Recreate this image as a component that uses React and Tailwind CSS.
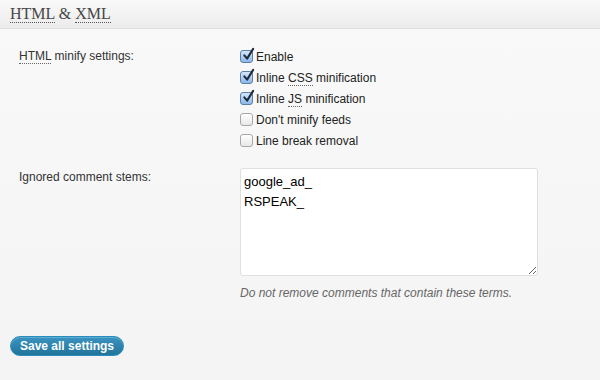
import React from 'react';

const font = { fontFamily: '"Liberation Sans", Arial, sans-serif' };

const Check = ({ checked }) => (
  <span
    className={
      'relative inline-block w-[13px] h-[13px] rounded-[3px] border shrink-0 ' +
      (checked
        ? 'border-[#5a7fa8] bg-gradient-to-b from-[#d4e6fb] to-[#8db7ea]'
        : 'border-[#a8a8a8] bg-gradient-to-b from-white to-[#e8e8e8]')
    }
  >
    {checked && (
      <svg viewBox="0 0 14 14" className="absolute left-[1px] top-[-4px] w-[13px] h-[14px]">
        <path d="M2.5 8.5 L5.5 12 L12 1.5" fill="none" stroke="#1d2a3a" strokeWidth="2.2" strokeLinecap="round" strokeLinejoin="round" />
      </svg>
    )}
  </span>
);

const Abbr = ({ children }) => (
  <span className="border-b border-dotted border-[#666]">{children}</span>
);

const options = [
  { label: 'Enable', checked: true },
  { label: <>Inline <Abbr>CSS</Abbr> minification</>, checked: true },
  { label: <>Inline <Abbr>JS</Abbr> minification</>, checked: true },
  { label: "Don't minify feeds", checked: false },
  { label: 'Line break removal', checked: false },
];

export default function App() {
  return (
    <div className="w-[600px] h-[380px] bg-gradient-to-b from-[#f9f9f9] to-[#f4f4f4] text-[#333] overflow-hidden" style={font}>
      {/* Kutu başlığı */}
      <div className="h-[29px] bg-gradient-to-b from-[#f9f9f9] to-[#ececec] border-b border-[#dfdfdf] pl-[10px] pt-[4px]">
        <h3 className="text-[16px] leading-[19px] text-[#464646]" style={{ fontFamily: '"Liberation Serif", Georgia, serif' }}>
          <span className="border-b border-dotted border-[#555]">HTML</span> &amp;{' '}
          <span className="border-b border-dotted border-[#555]">XML</span>
        </h3>
      </div>

      <div className="pt-[17px]">
        <div className="flex">
          <div className="w-[240px] pl-[19px] text-[12px] leading-[16px] pt-[2px]">
            <Abbr>HTML</Abbr> minify settings:
          </div>
          <div className="flex flex-col">
            {options.map((o, i) => (
              <label key={i} className="flex items-center h-[21px] text-[12px] text-[#222]">
                <Check checked={o.checked} />
                <span className="ml-[3px]">{o.label}</span>
              </label>
            ))}
          </div>
        </div>

        <div className="flex mt-[17px]">
          <div className="w-[240px] pl-[19px] text-[12px] leading-[16px] pt-[1px]">Ignored comment stems:</div>
          <div>
            <textarea
              className="block w-[298px] h-[108px] bg-white border border-[#dfdfdf] rounded-[3px] px-[3px] py-[3px] text-[13px] leading-[20px] text-black outline-none"
              style={font}
              defaultValue={'google_ad_\nRSPEAK_'}
            />
            <p className="mt-[8px] text-[12px] italic text-[#666]">Do not remove comments that contain these terms.</p>
          </div>
        </div>

        <div className="pl-[10px] mt-[31px]">
          <button className="h-[20px] px-[9px] rounded-full bg-gradient-to-b from-[#3b93c1] to-[#21759b] border border-[#298cba] text-white text-[12px] font-bold leading-[18px] shadow-[inset_0_1px_0_rgba(120,200,230,0.5)]">
            Save all settings
          </button>
        </div>
      </div>
    </div>
  );
}
